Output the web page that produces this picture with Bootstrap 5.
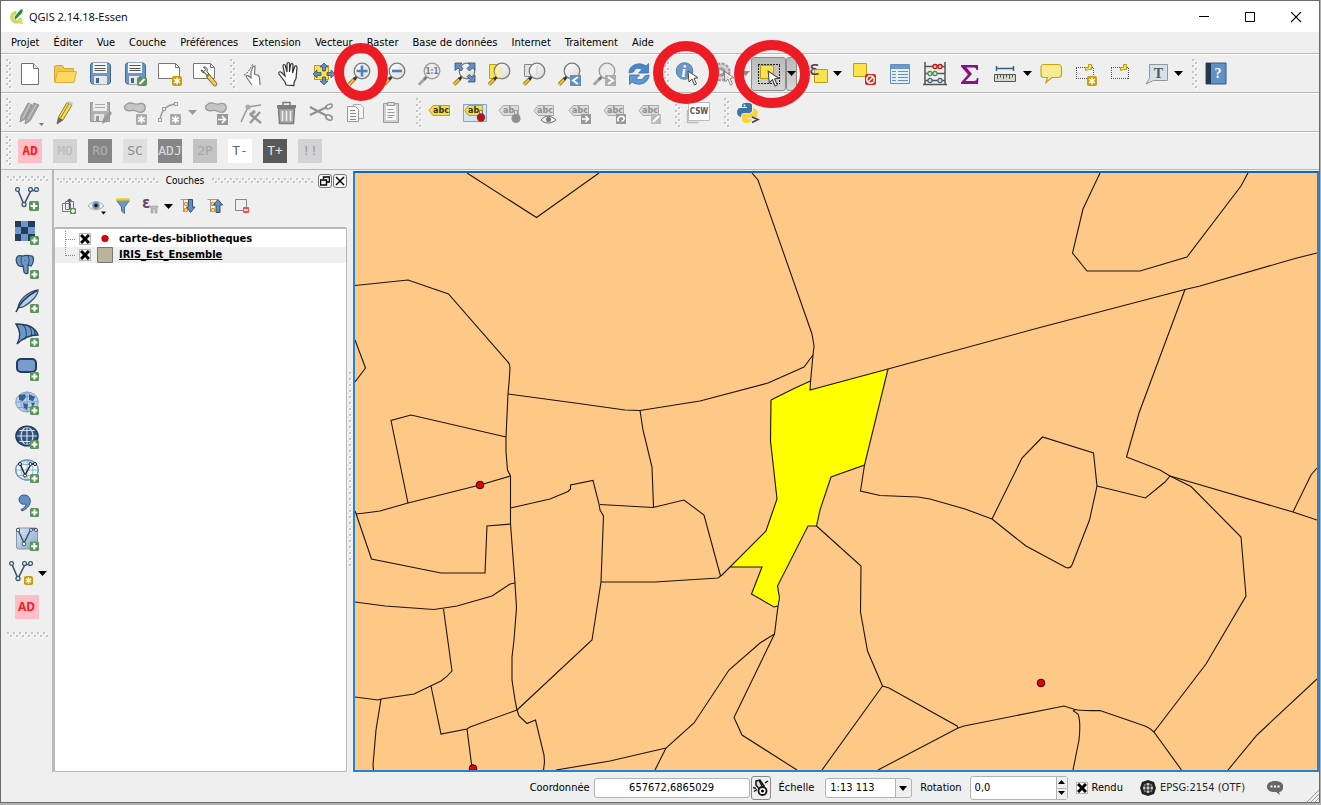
<!DOCTYPE html>
<html lang="fr">
<head>
<meta charset="utf-8">
<meta name="viewport" content="width=device-width, initial-scale=1">
<title>QGIS 2.14.18-Essen</title>
<link href="https://cdn.jsdelivr.net/npm/bootstrap@5.3.0/dist/css/bootstrap.min.css" rel="stylesheet">
<style>
:root{--face:#efefef;--line:#b8b8b8;--ui:"DejaVu Sans Condensed","DejaVu Sans",sans-serif}
body{font-family:var(--ui);font-size:11px;line-height:14px;color:#000;background:#b0b0b0;min-height:100vh;padding:0 1px 2px 0}
.app-window{background:var(--face);border:1px solid #6b6b6b}
.app-title{background:#fff;height:31px;font-family:"Open Sans",sans-serif}
.app-title h1{font-size:11px;line-height:16px;font-weight:400}
.btn{--bs-btn-padding-x:0;--bs-btn-padding-y:0;--bs-btn-border-radius:3px;--bs-btn-font-size:11px;--bs-btn-line-height:14px}
.win-btn{width:46px;height:30px}
.menu-bar{height:22px;gap:14px;border-bottom:1px solid var(--line);padding:1px 10px 0}
.menu-bar a{color:#000;text-decoration:none}
.tool-row{height:39px;border-top:1px solid #fff;border-bottom:1px solid var(--line);padding-left:5px}
.tool-row-short{height:38px}
.tool{width:35px;height:34px;flex:none;display:flex;align-items:center;justify-content:center}
.drop{width:11px;height:34px;flex:none;display:flex;align-items:center;justify-content:center}
.tool svg,.drop svg,.mini svg{display:block;overflow:visible}
.pressed{background:linear-gradient(#b9b9b9,#d6d6d6);border:1px solid #8b8b8b}
.grip{flex:none;width:6px;height:30px;background:url("data:image/svg+xml,%3Csvg xmlns='http://www.w3.org/2000/svg' width='6' height='6'%3E%3Cpath fill='%23fff' d='M1 1h2v2h-2zM4 4h2v2h-2z'/%3E%3Cpath fill='%23c2c2c2' d='M0 0h2v2h-2zM3 3h2v2h-2z'/%3E%3C/svg%3E")}
.tool + .grip,.drop + .grip{margin-left:8px}
.grip-h{width:auto;height:6px}
.tag-text{font-family:"DejaVu Sans",sans-serif;font-weight:bold;font-size:8px;fill:#333}
.tag-text.off{fill:#8f8f8f}
.code{width:24px;height:24px;border-radius:0;font:13px/24px "DejaVu Sans Mono",monospace;border:0;flex:none;padding:0}
.codes{gap:11px;padding-left:6px}
.code-ad{background:#ffbdc8;color:#fa1d26}
.code-mo{background:#d3d3d3;color:#b9b9b9}
.code-ro{background:#868686;color:#b0b0b0}
.code-sc{background:#dfdfdf;color:#8a8a8a}
.code-adj{background:#868686;color:#ddd}
.code-2p{background:#c3c3c3;color:#a6a6a6}
.code-tm{background:#fff;color:#666}
.code-tp{background:#595959;color:#e8e8e8}
.code-ex{background:#d3d3d3;color:#999}
.side-ad{font:bold 12px/24px "Noto Sans",sans-serif}
.side-bar{width:51px;flex:none;padding-top:6px}
.side-bar .grip-h{margin:0 4px 0 6px}
.side-bar .tool{height:34px;width:51px}
.layers{width:295px;flex:none;border-left:2px solid var(--line)}
.layers-head{height:21px;padding-left:3px}
.layers-head h2{font-size:10px;line-height:14px;font-weight:400}
.dock-btn{width:14px;height:14px;border:1px solid #777;background:#f6f6f6;flex:none;display:flex;align-items:center;justify-content:center;margin-left:1px}
.mini{width:27px;height:24px;flex:none;display:flex;align-items:center;justify-content:center}
.layers-tools{height:36px;padding:0 1px 6px}
.tree{background:#fff;border:1px solid var(--line);border-top-width:2px;border-radius:2px;padding-top:2px}
.tree li{height:16px;padding-left:10px}
.tree li.alt{background:#efefef}
.tree label{font-weight:700;margin-left:6px}
.tick{appearance:none;flex:none;width:12px;height:12px;border:1px solid #b4b4b4;background:#fff url("data:image/svg+xml,%3Csvg xmlns='http://www.w3.org/2000/svg' viewBox='0 0 10 10'%3E%3Cpath d='M1 1l8 8M9 1l-8 8' stroke='%23000' stroke-width='3'/%3E%3C/svg%3E") center/10px no-repeat}
.tick:not(:checked){background-image:none}
.splitter{width:6px;flex:none}
.splitter .grip{width:3px;height:198px}
.map-view{border:2px solid #2583d0;border-top-color:#0b66b4;margin-top:1px;background:#fec987;min-width:0;min-height:300px;position:relative}
.map-view svg{position:absolute;inset:0;width:100%;height:100%}
.status-row{height:30px;position:relative;padding:1px 35px 0 0}
.box{border:1px solid #b2b2b2;border-radius:3px;background:#fff;font-size:11px;line-height:14px;color:#000;padding:0 4px}
.coord{width:156px;height:20px;text-align:center;margin-left:4px}
.scale-list{width:87px;height:20px;margin-left:11px;appearance:none;background:#fff url("data:image/svg+xml,%3Csvg xmlns='http://www.w3.org/2000/svg' width='16' height='18'%3E%3Cpath fill='%23efefef' d='M0 0h16v18H0z'/%3E%3Cpath d='M.5 0v18' stroke='%23b2b2b2'/%3E%3Cpath d='M4 7h8l-4 5z'/%3E%3C/svg%3E") right center no-repeat}
.spin{width:98px;height:24px;margin-left:8px;padding:0}
.spin input{border:0;background:none;min-width:0;padding:0 4px;font-size:11px}
.spin-keys{width:16px;border-left:1px solid #b2b2b2;background:#efefef}
.spin-keys .btn{height:11px;border-radius:0;display:flex;align-items:center;justify-content:center}
.spin-keys .btn + .btn{border-top:1px solid #b2b2b2}
.pin-btn{width:20px;height:24px;border:1px solid #888;margin-left:1px}
.talk-btn{margin-left:20px}
.corner{position:absolute;right:0;bottom:0}
.rings{position:absolute;left:0;top:0;pointer-events:none;overflow:visible;z-index:5}
</style>
</head>
<body class="d-flex flex-column">

<svg width="0" height="0" class="position-absolute" aria-hidden="true">
  <defs>
    <linearGradient id="lens" x1="0" y1="0" x2="1" y2="1"><stop offset="0" stop-color="#fff"/><stop offset="1" stop-color="#d9d9d9"/></linearGradient>
    <linearGradient id="gsel" x1="0" y1="0" x2="1" y2="1"><stop offset="0" stop-color="#dfe9f4"/><stop offset="1" stop-color="#86a3c4"/></linearGradient>
  </defs>
  <symbol id="plus" viewBox="0 0 9 9"><rect width="9" height="9" rx="1.500" fill="#5b935b"/><path d="M4.500 1.500v6M1.500 4.500h6" stroke="#fff" stroke-width="2"/></symbol>
  <symbol id="star" viewBox="0 0 10 10"><rect width="10" height="10" rx="2" fill="#c99f0d"/><path d="M5 1.500v7M2 3.200l6 3.600M8 3.200l-6 3.600" stroke="#fff" stroke-width="1.400"/></symbol>
  <symbol id="gstar" viewBox="0 0 10 10"><rect width="10" height="10" rx="1" fill="#a9a9a9"/><path d="M5 1.500v7M2 3.200l6 3.600M8 3.200l-6 3.600" stroke="#fff" stroke-width="1.400"/></symbol>
  <symbol id="cursor" viewBox="0 0 12 16"><path d="M1 1l1 11 3-3 2.500 6 2-1L7 8.300l4-.5z" fill="#fff" stroke="#444" stroke-width="1"/></symbol>
  <symbol id="mag" viewBox="0 0 24 24"><path d="M2 22.500L8 16.500" stroke="#7a5d12" stroke-width="3.600"/><path d="M1.800 22.700L7.500 17" stroke="#f4c430" stroke-width="2.200"/><path d="M7 17.500l3-3" stroke="#333" stroke-width="2.600"/><circle cx="15" cy="9" r="7.800" fill="url(#lens)" stroke="#7c7c7c" stroke-width="1.300"/></symbol>
  <symbol id="gmag" viewBox="0 0 24 24"><path d="M1.800 22.700L8 16.500" stroke="#a5a5a5" stroke-width="3"/><path d="M7 17.500l3-3" stroke="#777" stroke-width="2.600"/><circle cx="15" cy="9" r="7.800" fill="#ececec" stroke="#9a9a9a" stroke-width="1.300"/></symbol>
  <symbol id="down" viewBox="0 0 9 5"><path d="M0 0h9L4.500 5z"/></symbol>
  <symbol id="tag" viewBox="0 0 24 24"><path d="M1 9.500L5 4.500h15.500v10H5z" fill="#dcdcdc" stroke="#ababab"/></symbol>
  <symbol id="mark" viewBox="0 0 24 24"><path d="M2 5.500h18M2 16.500h18M2.500 6v11M19.500 6v11" fill="none" stroke="#555" stroke-dasharray="1 1"/><path d="M11.500 5.500h3v-3h3v5h-3l-3 1z" fill="#fae34c" stroke="#b89d15"/></symbol>
  <symbol id="vnodes" viewBox="0 0 24 24"><path d="M3 3.500l6 14 7-14h5" fill="none" stroke="#3b5673" stroke-width="1.600"/><g fill="#fff" stroke="#3b5673" stroke-width="1.300"><circle cx="2.500" cy="2.500" r="1.900"/><circle cx="9" cy="17.500" r="2"/><circle cx="15.500" cy="2.500" r="1.900"/><circle cx="21.500" cy="2.500" r="1.900"/></g></symbol>
  <symbol id="globe" viewBox="0 0 24 24"><ellipse cx="12" cy="11" rx="11.300" ry="10"/><path d="M1 11h22M3 5.500h18M3 16.500h18M12 1v20M12 1c-8 5-8 15 0 20M12 1c8 5 8 15 0 20" fill="none"/></symbol>
  <symbol id="gpoly" viewBox="0 0 24 24"><path d="M4 3c4-3 7 1 11 0 5-2 8 1 7 5-1 4-6 4-9 2-4-2-8 2-11-2-1-2 0-4 2-5z" fill="#c5c5c5" stroke="#999" stroke-width="1.300"/></symbol>
</svg>

<div class="app-window flex-grow-1 d-flex flex-column position-relative">

  <header class="app-title d-flex align-items-center">
    <svg class="ms-2" width="16" height="16" viewBox="0 0 16 16" aria-hidden="true"><path d="M7 2.500a5.800 5.800 0 106 7.500l-2.500-1a3.300 3.300 0 11-3.500-3.800z" fill="#d3e25a" stroke="#a8bd2e" stroke-width=".6"/><path d="M9 10l4 1 1 4-3 0-3-3z" fill="#d5e25b"/><path d="M6 11l-.5-3L11.500.5h2.500l-1 3.500z" fill="#2b8b35"/></svg>
    <h1 class="m-0 ms-1">QGIS 2.14.18-Essen</h1>
    <div class="ms-auto d-flex">
      <button class="btn win-btn" type="button" aria-label="Réduire"><svg width="11" height="11"><path d="M0 4.500h10" stroke="#000"/></svg></button>
      <button class="btn win-btn" type="button" aria-label="Agrandir"><svg width="11" height="11"><path d="M.5.5h9v9h-9z" fill="none" stroke="#000"/></svg></button>
      <button class="btn win-btn" type="button" aria-label="Fermer"><svg width="11" height="11"><path d="M0 0l10 10M10 0L0 10" stroke="#000" stroke-width="1.200"/></svg></button>
    </div>
  </header>

  <nav class="menu-bar d-flex align-items-center">
    <a href="#">Projet</a><a href="#">Éditer</a><a href="#">Vue</a><a href="#">Couche</a><a href="#">Préférences</a><a href="#">Extension</a><a href="#">Vecteur</a><a href="#">Raster</a><a href="#">Base de données</a><a href="#">Internet</a><a href="#">Traitement</a><a href="#">Aide</a>
  </nav>

  <div class="tool-row d-flex align-items-center" role="toolbar" aria-label="Projet et navigation">
    <span class="grip"></span>
    <button class="btn tool" type="button" aria-label="Nouveau"><svg width="24" height="24"><path d="M3.500 1.500h12l5 5v16h-17z" fill="#fff" stroke="#707070"/><path d="M15.500 1.500v5h5" fill="#e4e4e4" stroke="#707070"/></svg></button>
    <button class="btn tool" type="button" aria-label="Ouvrir"><svg width="24" height="24"><path d="M1.500 20V4.500l1.500-1h6.500l1.500 3h9.500V10" fill="#f0c54c" stroke="#d3a633"/><path d="M4.500 9.500h19l-2.500 11H2z" fill="#ffd95e" stroke="#dcae3a"/></svg></button>
    <button class="btn tool" type="button" aria-label="Enregistrer"><svg width="24" height="24"><path d="M3.500 1h17l2 2v17l-1.500 2h-17l-1.500-2V3z" fill="#6c98c8" stroke="#456587"/><path d="M5 1h14v10H5z" fill="#f7f7f7"/><path d="M6.500 3.500h11M6.500 6.500h11M6.500 8.500h11" stroke="#555"/><path d="M6 14h13v8H6z" fill="#e7e7e7"/><path d="M8 16h3v5H8z" fill="#456587"/></svg></button>
    <button class="btn tool" type="button" aria-label="Enregistrer sous"><svg width="24" height="24"><path d="M3.500 1h17l2 2v17l-1.500 2h-17l-1.500-2V3z" fill="#6c98c8" stroke="#456587"/><path d="M5 1h14v10H5z" fill="#f7f7f7"/><path d="M6.500 3.500h11M6.500 6.500h11M6.500 8.500h11" stroke="#555"/><path d="M6 14h10v8H6z" fill="#e7e7e7"/><path d="M8 16h3v5H8z" fill="#456587"/><rect x="14" y="15" width="10" height="9" rx="2" fill="#5b935b"/><path d="M16.500 22l5-5" stroke="#fff" stroke-width="2"/></svg></button>
    <button class="btn tool" type="button" aria-label="Nouveau composeur"><svg width="24" height="24"><path d="M.5 1.500h17l4 4v11H.5z" fill="#fff" stroke="#777"/><path d="M17.500 1.500v4h4" fill="none" stroke="#777"/><use href="#star" x="14" y="14" width="10" height="10"/></svg></button>
    <button class="btn tool" type="button" aria-label="Gestionnaire de composeurs"><svg width="24" height="24"><path d="M.5 1.500h17l4 4v11H.5z" fill="#fff" stroke="#777"/><path d="M17.500 1.500v4h4" fill="none" stroke="#777"/><path d="M8 8a4 4 0 004 3l3 4 2-1.500-3-4c1-3-1-5-3.500-4.500l2 2.500-1.500 2z" fill="#eee" stroke="#444"/><path d="M15.500 14.500l6.500 7.500" stroke="#7a6420" stroke-width="4.600" stroke-linecap="round"/><path d="M16 15l6 7" stroke="#e9cd67" stroke-width="3" stroke-linecap="round"/></svg></button>
    <span class="grip"></span>
    <button class="btn tool" type="button" aria-label="Toucher"><svg width="24" height="24"><path d="M10 23l-5-7-1-2 2-.5 3 2.500V9.500l2-5 2-.5-.5 8 4 1.500 1 2 .5 7.500" fill="#fff" stroke="#777" stroke-width="1.200"/><path d="M2 13l3-2 3-4 3-5" fill="none" stroke="#666" stroke-dasharray="2 1"/></svg></button>
    <button class="btn tool" type="button" aria-label="Se déplacer"><svg width="24" height="24"><path d="M9 23l-1-3-6-8c-1-2 1-3 2.500-1.500L8 14 6 4c0-2 2-2 2.500 0l1.500 6V2c0-2 2.500-2 2.500 0v8l1-7c.5-2 2.500-1.500 2.500 0l-.5 8 2-6c.5-2 2.500-1 2.500.5l-1 11-2 4v3z" fill="#fff" stroke="#333" stroke-width="1.200"/></svg></button>
    <button class="btn tool" type="button" aria-label="Centrer sur la sélection"><svg width="24" height="24"><path d="M2.500 3.500h14v14h-14z" fill="#fae34c" stroke="#b89d15"/><g fill="#5f8fc4" stroke="#345" stroke-width=".7"><path d="M12 1l4 4h-2.500v4h-3V5H8zM12 23l4-4h-2.500v-4h-3v4H8zM1 12l4-4v2.500h4v3H5V16zM23 12l-4-4v2.500h-4v3h4V16z"/></g></svg></button>
    <button class="btn tool" type="button" aria-label="Zoom +"><svg width="24" height="24"><use href="#mag" width="24" height="24"/><path d="M15 3.500v11M9.500 9h11" stroke="#4b82bb" stroke-width="2.600"/></svg></button>
    <button class="btn tool" type="button" aria-label="Zoom -"><svg width="24" height="24"><use href="#mag" width="24" height="24"/><path d="M10 9h10" stroke="#4b82bb" stroke-width="2.600"/></svg></button>
    <button class="btn tool" type="button" aria-label="Zoom 1:1"><svg width="24" height="24"><use href="#gmag" width="24" height="24"/><text x="15" y="12" text-anchor="middle" font-family="DejaVu Sans Condensed" font-weight="bold" font-size="8" fill="#777">1:1</text></svg></button>
    <button class="btn tool" type="button" aria-label="Zoom étendu"><svg width="24" height="24"><use href="#mag" width="24" height="24"/><g fill="#5f8fc4" stroke="#345270" stroke-width=".8"><path d="M3 1h7L8 3.500l3 3L9 9 6 6 3 8.500zM23 1v7l-2.500-2-3 3-2.500-2.500 3-3L16 1zM23 20h-7l2-2.500-3-3 2.500-2 3 3L23 13z"/></g></svg></button>
    <button class="btn tool" type="button" aria-label="Zoom sur la sélection"><svg width="24" height="24"><path d="M2.500 2.500h12v14h-12z" fill="#fae34c" stroke="#b89d15"/><use href="#mag" width="24" height="24"/><path d="M15 3.500v12.500h-4a7 7 0 01-2-10z" fill="#f8ef9a" opacity=".8"/></svg></button>
    <button class="btn tool" type="button" aria-label="Zoom sur la couche"><svg width="24" height="24"><path d="M2.500 2.500h12v12h-12z" fill="#e3e3e3" stroke="#888"/><use href="#mag" width="24" height="24"/><path d="M15 3.500v10" stroke="#ccc"/></svg></button>
    <button class="btn tool" type="button" aria-label="Zoom précédent"><svg width="24" height="24"><use href="#mag" width="24" height="24"/><path d="M13 13h11v11H13z" fill="#5f8fc4"/><path d="M21 15l-5 3.500 5 3.500" fill="none" stroke="#fff" stroke-width="2"/></svg></button>
    <button class="btn tool" type="button" aria-label="Zoom suivant"><svg width="24" height="24"><use href="#gmag" width="24" height="24"/><path d="M13 13h11v11H13z" fill="#acacac"/><path d="M16 15l5 3.500-5 3.500" fill="none" stroke="#fff" stroke-width="2"/></svg></button>
    <button class="btn tool" type="button" aria-label="Rafraîchir"><svg width="24" height="24"><path d="M2 11C2 3 12-1 19 4l2.500-2.500V11h-10L15 7.500C11 5 7 7 6.500 10z" fill="#4b87c6" stroke="#3a6ea5" stroke-width=".8"/><path d="M22 13c0 8-10 12-17 7l-2.500 2.500V13h10L9 16.500c4 2.500 8 .5 8.500-2.500z" fill="#5d97d2" stroke="#3a6ea5" stroke-width=".8"/></svg></button>
    <span class="grip"></span>
    <button class="btn tool" type="button" aria-label="Identifier"><svg width="24" height="24"><circle cx="8.500" cy="9" r="8.300" fill="#6c98c8" stroke="#5681b1"/><text x="5.500" y="14.500" font-family="Liberation Serif" font-style="italic" font-weight="bold" font-size="16" fill="#fff">i</text><use href="#cursor" x="11" y="8" width="12" height="16"/></svg></button>
    <button class="btn tool" type="button" aria-label="Lancer une action"><svg width="24" height="24"><circle cx="10" cy="10" r="8.500" fill="#cfcfcf" stroke="#9b9b9b" stroke-width="2" stroke-dasharray="3 1.500"/><circle cx="10" cy="10" r="4.500" fill="#999"/><path d="M8.500 7.500l4 2.500-4 2.500z" fill="#fff"/><use href="#cursor" x="12" y="8" width="12" height="16" opacity=".6"/></svg></button>
    <button class="btn drop" type="button" aria-label="Actions"><svg width="9" height="5" fill="#8a8a8a"><use href="#down" width="9" height="5"/></svg></button>
    <button class="btn tool pressed" type="button" aria-label="Sélectionner"><svg width="24" height="24"><path d="M1 2.500h22M1 21.500h22M1.500 3v18M22.500 3v18" fill="none" stroke="#222" stroke-dasharray="2 1"/><path d="M3.500 3.500h13v13h-13z" fill="#fae34c" stroke="#b89d15"/><use href="#cursor" x="10" y="8" width="13" height="17"/></svg></button>
    <button class="btn drop pressed" type="button" aria-label="Modes de sélection"><svg width="9" height="5"><use href="#down" width="9" height="5"/></svg></button>
    <button class="btn tool" type="button" aria-label="Sélection par expression"><svg width="24" height="24"><path d="M11.500 7.500h13v13h-13z" fill="#fae34c" stroke="#b89d15"/><text x="6" y="13" font-family="DejaVu Sans" font-size="20" fill="#5b3a60">ε</text></svg></button>
    <button class="btn drop me-1" type="button" aria-label="Expressions"><svg width="9" height="5"><use href="#down" width="9" height="5"/></svg></button>
    <button class="btn tool" type="button" aria-label="Désélectionner"><svg width="24" height="24"><path d="M.5 1.500h13v13h-13z" fill="#fae34c" stroke="#b89d15"/><rect x="12" y="12" width="11" height="11" rx="2" fill="#cf2a27"/><circle cx="17.500" cy="17.500" r="3.700" fill="none" stroke="#fff" stroke-width="1.500"/><path d="M15 20l5-5" stroke="#fff" stroke-width="1.500"/></svg></button>
    <button class="btn tool" type="button" aria-label="Table d'attributs"><svg width="24" height="24"><path d="M2.500 2.500h19v19h-19z" fill="#e6eff8" stroke="#5f8fc4"/><path d="M3 3h18v4H3z" fill="#6c98c8"/><path d="M4 9.500h4M10 9.500h10M4 12.500h4M10 12.500h10M4 15.500h4M10 15.500h10M4 18.500h4M10 18.500h10" stroke="#5f8fc4"/></svg></button>
    <button class="btn tool" type="button" aria-label="Calculatrice de champ"><svg width="24" height="24"><path d="M2 0v22M22 0v22M0 22.500h24M2 4.500h20M2 11.500h20M2 18.500h20" stroke="#555" stroke-width="1.500"/><g stroke-width="1.200"><g fill="#f1b6b6" stroke="#b11"><circle cx="12" cy="4.500" r="2.100"/><circle cx="17" cy="4.500" r="2.100"/></g><g fill="#cfe6cf" stroke="#488a48"><circle cx="7" cy="11.500" r="2.100"/><circle cx="12" cy="11.500" r="2.100"/></g><g fill="#cddff2" stroke="#467"><circle cx="7" cy="18.500" r="2.100"/><circle cx="17" cy="18.500" r="2.100"/></g></g></svg></button>
    <button class="btn tool" type="button" aria-label="Résumé statistique"><svg width="24" height="24"><path d="M3 3h17v5h-1.500c-.5-2-1-2.500-3-2.500H8.500L14 12l-6.500 7H16c2 0 2.500-1 3-3h1.500L20 22H3v-1.500l7-8L3 4.500z" fill="#8a0f8a"/></svg></button>
    <button class="btn tool" type="button" aria-label="Mesurer"><svg width="24" height="24"><path d="M3.500 4v5M20.500 4v5M3.500 6.500h17" stroke="#3b5f7d" stroke-width="1.500"/><path d="M1.500 12.500h21v7h-21z" fill="#d8d8d0" stroke="#555"/><path d="M4.500 13v4M7.500 13v2.500M10.500 13v4M13.500 13v2.500M16.500 13v4M19.500 13v2.500" stroke="#555"/></svg></button>
    <button class="btn drop" type="button" aria-label="Mesures"><svg width="9" height="5"><use href="#down" width="9" height="5"/></svg></button>
    <button class="btn tool" type="button" aria-label="Infobulles"><svg width="24" height="24"><path d="M5 2.500h14c3 0 3.500 1 3.500 4v5c0 3-1 4-3.500 4h-6l-6 5 1.500-5H5c-2.500 0-3-1-3-4v-5c0-3 .5-4 3-4z" fill="#f8ec92" stroke="#c9a30f" stroke-width="1.200"/></svg></button>
    <button class="btn tool" type="button" aria-label="Nouveau signet"><svg width="24" height="24"><use href="#mark" width="24" height="24"/><use href="#star" x="13" y="14" width="10" height="10"/></svg></button>
    <button class="btn tool" type="button" aria-label="Signets"><svg width="24" height="24"><use href="#mark" width="24" height="24"/></svg></button>
    <button class="btn tool" type="button" aria-label="Annotation"><svg width="24" height="24"><path d="M5.500 2.500h18v16h-14l-7.500 3.500 3.500-5.500z" fill="#d6e0e8" stroke="#8e979f"/><text x="14.500" y="15.500" text-anchor="middle" font-family="Liberation Serif" font-weight="bold" font-size="14" fill="#555">T</text></svg></button>
    <button class="btn drop" type="button" aria-label="Annotations"><svg width="9" height="5"><use href="#down" width="9" height="5"/></svg></button>
    <span class="grip"></span>
    <button class="btn tool" type="button" aria-label="Aide"><svg width="24" height="24"><path d="M2 1h20v21H2z" fill="#6090c8" stroke="#3b5673"/><path d="M2 1h5v21H2z" fill="#26374b"/><text x="14" y="16" text-anchor="middle" font-family="Liberation Serif" font-weight="bold" font-size="14" fill="#fff">?</text></svg></button>
  </div>

  <div class="tool-row d-flex align-items-center" role="toolbar" aria-label="Numérisation et étiquettes">
    <span class="grip"></span>
    <button class="btn tool" type="button" aria-label="Modifications en cours"><svg width="24" height="24"><g fill="#a6a6a6" stroke="#858585" stroke-width=".8"><path d="M2 21l1-6L10 2l4 2-7 14z"/><path d="M7 23l1-6L16 2l5 2-9 16z"/></g><path d="M12 3L5 17M18 4l-8 14" stroke="#ccc"/><path d="M21 22h5l-2.500 3z" fill="#777"/></svg></button>
    <button class="btn tool" type="button" aria-label="Basculer en mode édition"><svg width="24" height="24"><path d="M4 23l1.500-7L14 1.500l5 2.500-9 15z" fill="#f4dc55" stroke="#94822a"/><path d="M16 2.500L7.500 17" stroke="#94822a"/><path d="M14 1.500l5 2.500 1-2-4-2z" fill="#c9c9c9"/><path d="M4 23l1.500-7 4.500 3z" fill="#666"/></svg></button>
    <button class="btn tool" type="button" aria-label="Enregistrer les modifications"><svg width="24" height="24"><path d="M2.500 1.500h19v19h-19z" fill="#b0b0b0" stroke="#969696"/><path d="M5 1h14v9H5z" fill="#eee"/><path d="M7 3.500h10M7 6.500h10" stroke="#aaa"/><path d="M6 13h10v7H6z" fill="#e2e2e2"/><path d="M8 15h3v5H8z" fill="#999"/><path d="M14 23l1-5 7-8 2 2-6 9z" fill="#999"/></svg></button>
    <button class="btn tool" type="button" aria-label="Ajouter une entité"><svg width="24" height="24"><use href="#gpoly" width="24" height="24"/><use href="#gstar" x="13" y="13" width="11" height="11"/></svg></button>
    <button class="btn tool" type="button" aria-label="Ajouter une courbe"><svg width="24" height="24"><path d="M2 19C3 11 7 4 18 3" fill="none" stroke="#999" stroke-width="1.400"/><path d="M.5 17.500h3v3h-3zM4.500 6.500h3v3h-3zM16.500 1.500h3v3h-3z" fill="#eee" stroke="#999"/><use href="#gstar" x="12" y="13" width="11" height="11"/></svg></button>
    <button class="btn drop" type="button" aria-label="Courbes"><svg width="9" height="5" fill="#999"><use href="#down" width="9" height="5"/></svg></button>
    <button class="btn tool" type="button" aria-label="Déplacer une entité"><svg width="24" height="24"><use href="#gpoly" width="24" height="24"/><path d="M13 13h11v11H13z" fill="#999"/><path d="M14 18.500h7M18 15l3.500 3.500L18 22" stroke="#fff" stroke-width="1.600" fill="none"/></svg></button>
    <button class="btn tool" type="button" aria-label="Outil de nœud"><svg width="24" height="24"><path d="M2 21L9 6l13-2" fill="none" stroke="#999" stroke-width="1.500"/><circle cx="9" cy="6" r="2.600" fill="#aaa"/><path d="M11 13l11 9M21 11l-10 11" stroke="#999" stroke-width="2.400"/><path d="M11 14l5-4" stroke="#999" stroke-width="3"/></svg></button>
    <button class="btn tool" type="button" aria-label="Supprimer"><svg width="24" height="24"><path d="M4.500 7.500h16l-1 15h-14z" fill="#aaa" stroke="#7d7d7d" stroke-width="1.500"/><path d="M3 5.500h19" stroke="#7d7d7d" stroke-width="3"/><path d="M9 4V1.500h7V4" fill="none" stroke="#7d7d7d" stroke-width="1.500"/><path d="M8.500 10v10M12.500 10v10M16.500 10v10" stroke="#eee" stroke-width="1.600"/></svg></button>
    <button class="btn tool" type="button" aria-label="Couper"><svg width="24" height="24"><path d="M1 6l17 9M1 14l17-8" stroke="#909090" stroke-width="2"/><ellipse cx="20" cy="5.500" rx="3.500" ry="2" fill="none" stroke="#909090" stroke-width="1.500" transform="rotate(-25 20 5.500)"/><ellipse cx="20" cy="16.500" rx="3.500" ry="2.300" fill="none" stroke="#909090" stroke-width="1.500" transform="rotate(30 20 16.500)"/></svg></button>
    <button class="btn tool" type="button" aria-label="Copier"><svg width="24" height="24"><path d="M9.500 3.500h7l3 3v11h-10z" fill="#f4f4f4" stroke="#aaa"/><path d="M3.500 5.500h8l3 3v12h-11z" fill="#f8f8f8" stroke="#999"/><path d="M6 9.500h5M6 12.500h6M6 15.500h6M6 18.500h6" stroke="#888"/></svg></button>
    <button class="btn tool" type="button" aria-label="Coller"><svg width="24" height="24"><path d="M4.500 2.500h15v19h-15z" fill="#d0d0d0" stroke="#9a9a9a"/><path d="M7 5h10v14H7z" fill="#f7f7f7"/><path d="M8.500 1.500h7v3h-7z" fill="#ddd" stroke="#999"/><path d="M8.500 8.500h6M8.500 11.500h7M8.500 14.500h7M8.500 16.500h5" stroke="#999"/></svg></button>
    <span class="grip"></span>
    <button class="btn tool" type="button" aria-label="Étiquetage"><svg width="24" height="24"><path d="M1 9.500L5 4.500h16.500v10H5z" fill="#f7dc45" stroke="#c4a112"/><text class="tag-text" x="5" y="12">abc</text></svg></button>
    <button class="btn tool" type="button" aria-label="Épingler"><svg width="24" height="24"><path d="M.5 3.500h23v17H.5z" fill="#d5e3f3" stroke="#7ba7d8"/><path d="M2 9.500l3.500-5h14v10h-14z" fill="#f7dc45" stroke="#c4a112"/><text class="tag-text" x="5" y="12">ab</text><path d="M16.500 14V9.500h3V14" fill="#ddd" stroke="#777"/><circle cx="18" cy="16.500" r="4.200" fill="#b01818"/></svg></button>
    <button class="btn tool" type="button" aria-label="Étiquettes épinglées"><svg width="24" height="24"><use href="#tag" width="24" height="24"/><text class="tag-text off" x="5" y="12">ab</text><path d="M16.500 14V9.500h3V14" fill="#ddd" stroke="#999"/><circle cx="18" cy="17.500" r="4.600" fill="#919191"/></svg></button>
    <button class="btn tool" type="button" aria-label="Afficher les étiquettes"><svg width="24" height="24"><use href="#tag" width="24" height="24"/><text class="tag-text off" x="4" y="12">abc</text><path d="M8 19c4-5 10-5 15 0-5 4-11 4-15 0z" fill="#f2f2f2" stroke="#666"/><circle cx="15.500" cy="18.500" r="2.500" fill="#777"/></svg></button>
    <button class="btn tool" type="button" aria-label="Déplacer l'étiquette"><svg width="24" height="24"><use href="#tag" width="24" height="24"/><text class="tag-text off" x="4" y="12">abc</text><path d="M13 13h10v10H13z" fill="#999"/><path d="M14 18h6M17.500 15l3 3-3 3" stroke="#fff" stroke-width="1.500" fill="none"/></svg></button>
    <button class="btn tool" type="button" aria-label="Pivoter l'étiquette"><svg width="24" height="24"><use href="#tag" width="24" height="24"/><text class="tag-text off" x="4" y="12">abc</text><path d="M13 13h10v10H13z" fill="#999"/><path d="M15.500 20.500c-2-3 1-6 4-5s1.500 5-1 4.500" stroke="#fff" stroke-width="1.500" fill="none"/></svg></button>
    <button class="btn tool" type="button" aria-label="Modifier l'étiquette"><svg width="24" height="24"><use href="#tag" width="24" height="24"/><text class="tag-text off" x="4" y="12">abc</text><path d="M13 13h10v10H13z" fill="#bbb"/><path d="M15 21l6-6" stroke="#fff" stroke-width="2"/></svg></button>
    <span class="grip"></span>
    <button class="btn tool" type="button" aria-label="Catalogue CSW"><svg width="24" height="24"><path d="M.5 9v12.500h11" fill="none" stroke="#bbb" stroke-width="1.500"/><path d="M1.500 1.500h21v18h-21z" fill="#fff" stroke="#bbb"/><text x="12" y="13" text-anchor="middle" font-family="DejaVu Sans Condensed" font-weight="bold" font-size="8" fill="#555">CSW</text></svg></button>
    <span class="grip"></span>
    <button class="btn tool" type="button" aria-label="Console Python"><svg width="24" height="24"><path d="M6 4c0-3 10-3 10 0v5c0 2-1 3-3 3H8c-2 0-3 1-3 4-5 0-5-9-1-9h7V6H6z" fill="#3b75a8"/><path d="M17 7c6 0 6 9 2 10h-8v1h5c0 5-10 5-10 1v-4c0-2 2-2.500 3-2.500h5c2 0 3-1.500 3-3.500z" fill="#fbd43c"/><circle cx="8.500" cy="4.500" r="1" fill="#fff"/><path d="M16 16l6 2.500-6 3" fill="none" stroke="#444" stroke-width="1.600"/></svg></button>
  </div>

  <div class="tool-row tool-row-short d-flex align-items-center" role="toolbar" aria-label="Numérisation avancée">
    <span class="grip"></span>
    <div class="codes d-flex">
      <button class="code code-ad fw-bold" type="button">AD</button>
      <button class="code code-mo" type="button">MO</button>
      <button class="code code-ro" type="button">RO</button>
      <button class="code code-sc" type="button">SC</button>
      <button class="code code-adj" type="button">ADJ</button>
      <button class="code code-2p" type="button">2P</button>
      <button class="code code-tm" type="button">T-</button>
      <button class="code code-tp" type="button">T+</button>
      <button class="code code-ex" type="button">!!</button>
    </div>
  </div>

  <main class="flex-grow-1 d-flex">
    <div class="side-bar" role="toolbar" aria-label="Gestion des couches">
      <span class="grip grip-h d-block"></span>
      <button class="btn tool" type="button" aria-label="Couche vecteur"><svg width="24" height="24"><use href="#vnodes" width="24" height="24"/><use href="#plus" x="14" y="14" width="10" height="10"/></svg></button>
      <button class="btn tool" type="button" aria-label="Couche raster"><svg width="24" height="24"><path d="M0 0h20v20H0z" fill="#6c98c8"/><path d="M0 0h6v6H0zM13 0h7v6h-7zM6 6h7v7H6zM0 13h6v7H0zM13 13h7v7h-7z" fill="#233b5c"/><use href="#plus" x="15" y="15" width="9" height="9"/></svg></button>
      <button class="btn tool" type="button" aria-label="Couche PostGIS"><svg width="24" height="24"><path d="M3 1c2-1 4 0 5 0 2-1 4-1 9 0 3 2 1 8-1 10l-3-1v8c-1 1-3 1-4-1l-1-6c-2 1-4 0-5-1C1 7 0 3 3 1z" fill="#6c98c8" stroke="#2c4768" stroke-width="1.200"/><path d="M7 1C5 4 6 8 8 11M13 1c2 3 1 7 0 9M10 5v1" fill="none" stroke="#2c4768"/><use href="#plus" x="15" y="15" width="9" height="9"/></svg></button>
      <button class="btn tool" type="button" aria-label="Couche SpatiaLite"><svg width="24" height="24"><path d="M3 19C4 11 12 3 23 1c0 5-6 12-15 17z" fill="#b9d0ea" stroke="#3b5673" stroke-width="1.300"/><path d="M1 23C4 15 12 7 22 1.500" fill="none" stroke="#233b5c" stroke-width="1.500"/><use href="#plus" x="15" y="15" width="9" height="9"/></svg></button>
      <button class="btn tool" type="button" aria-label="Couche MSSQL"><svg width="24" height="24"><path d="M1 1c9 0 19 2 22 11-7 0-14 2-21 9 4-7 4-13-1-20z" fill="#6c98c8" stroke="#233b5c" stroke-width="1.300"/><path d="M8 1.500c4 5 4 11 2 15M13 2.500c4 4 4 8 3 11M18 5c2 3 2 5 2 7" fill="none" stroke="#233b5c"/><use href="#plus" x="15" y="15" width="9" height="9"/></svg></button>
      <button class="btn tool" type="button" aria-label="Couche Oracle"><svg width="24" height="24"><rect x="2" y="2" width="19" height="13" rx="4" fill="#7a9bd0" stroke="#233b5c" stroke-width="2"/><use href="#plus" x="15" y="15" width="9" height="9"/></svg></button>
      <button class="btn tool" type="button" aria-label="Couche WMS"><svg width="24" height="24"><use href="#globe" width="24" height="24" fill="#b8d0ea" stroke="#7ea3cc"/><path d="M4 4l6-1 1 3-3 4-4-1zM14 3l6 3-2 4-4-1zM8 12l5 1-1 6-3-2zM16 12l4 0-2 4z" fill="#3b5f8a"/><use href="#plus" x="15" y="15" width="9" height="9"/></svg></button>
      <button class="btn tool" type="button" aria-label="Couche WCS"><svg width="24" height="24"><use href="#globe" width="24" height="24" fill="#35557f" stroke="#cfe0f2" stroke-width="1.200"/><ellipse cx="12" cy="11" rx="11" ry="9.800" fill="none" stroke="#233b5c" stroke-width="1.600"/><use href="#plus" x="15" y="15" width="9" height="9"/></svg></button>
      <button class="btn tool" type="button" aria-label="Couche WFS"><svg width="24" height="24"><use href="#globe" width="24" height="24" fill="#f3f8fd" stroke="#8eb2da"/><ellipse cx="12" cy="11" rx="11.300" ry="10" fill="none" stroke="#6c98c8" stroke-width="1.300"/><path d="M5 5l5 11 6-11h5" fill="none" stroke="#222" stroke-width="1.400"/><g fill="#fff" stroke="#222"><circle cx="5" cy="5" r="1.500"/><circle cx="10" cy="16.500" r="1.500"/><circle cx="15.500" cy="5" r="1.500"/><circle cx="20" cy="5" r="1.500"/></g><use href="#plus" x="15" y="15" width="9" height="9"/></svg></button>
      <button class="btn tool" type="button" aria-label="Texte délimité"><svg width="24" height="24"><path d="M9 2c5 0 7 4 6 8-1 4-5 7-8 8l-1-1.500c3-1 5-3 5-5.500-4 1-7-1-7-4.500C4 4 6 2 9 2z" fill="#6090c8" stroke="#3b5673"/><use href="#plus" x="15" y="15" width="9" height="9"/></svg></button>
      <button class="btn tool" type="button" aria-label="Couche virtuelle"><svg width="24" height="24"><rect x="1.500" y="1" width="21" height="21" rx="2" fill="url(#gsel)" stroke="#8298b0"/><path d="M3 3l6 13 7-14h6" fill="none" stroke="#3b5673" stroke-width="1.500"/><g fill="#fff" stroke="#3b5673"><circle cx="3" cy="3" r="1.700"/><circle cx="9" cy="17" r="1.800"/><circle cx="16" cy="3" r="1.500"/><circle cx="21" cy="3" r="1.500"/></g><use href="#plus" x="14.500" y="14.500" width="9.500" height="9.500"/></svg></button>
      <div class="d-flex ps-1">
        <button class="btn tool flex-shrink-1" type="button" aria-label="Nouvelle couche"><svg width="24" height="24"><use href="#vnodes" width="24" height="24"/><use href="#star" x="15" y="15" width="9" height="9"/></svg></button>
        <button class="btn drop me-1" type="button" aria-label="Types de couche"><svg width="9" height="5"><use href="#down" width="9" height="5"/></svg></button>
      </div>
      <div class="tool"><button class="code code-ad side-ad" type="button">AD</button></div>
      <span class="grip grip-h d-block mt-2"></span>
    </div>

    <section class="layers d-flex flex-column">
      <div class="layers-head d-flex align-items-center">
        <span class="grip grip-h flex-fill"></span>
        <h2 class="m-0 mx-2">Couches</h2>
        <span class="grip grip-h flex-fill me-1"></span>
        <button class="btn dock-btn" type="button" aria-label="Détacher"><svg width="10" height="10"><path d="M3.500 3V1h6v5h-3M.5 4h6v5h-6z" fill="none" stroke="#000" stroke-width="1.400"/></svg></button>
        <button class="btn dock-btn" type="button" aria-label="Fermer le panneau"><svg width="10" height="10"><path d="M1 1l8 8M9 1L1 9" stroke="#000" stroke-width="1.500"/></svg></button>
      </div>
      <div class="layers-tools d-flex align-items-center">
        <button class="btn mini" type="button" aria-label="Ajouter un groupe"><svg width="16" height="16"><path d="M1.500 5.500h8v8h-8zM4.500 3.500h8v8h-8z" fill="none" stroke="#777"/><path d="M8.500 2v9M8.500 1l-2 2M8.500 1l2 2" stroke="#3b5f8a" stroke-width="1.300"/><use href="#plus" x="9" y="10" width="6" height="6"/></svg></button>
        <button class="btn mini" type="button" aria-label="Visibilité"><svg width="16" height="16"><path d="M0 8c4-6 12-6 16 0-5 5-12 5-16 0z" fill="#eee" stroke="#aaa"/><circle cx="8" cy="7.500" r="3.800" fill="#6c98c8"/><circle cx="8" cy="7.500" r="1.800" fill="#111"/><path d="M13 13.500h5l-2.500 3z"/></svg></button>
        <button class="btn mini" type="button" aria-label="Filtrer la légende"><svg width="16" height="16"><path d="M1.500 2.500h13L9.500 9v6.500l-3-2.500V9z" fill="#6c98c8" stroke="#49709b"/><path d="M1 1.500h14" stroke="#e3cf3c" stroke-width="2.500"/></svg></button>
        <button class="btn mini" type="button" aria-label="Filtrer par expression"><svg width="16" height="16"><text x="0" y="10" font-family="DejaVu Sans" font-weight="bold" font-size="15" fill="#6b4a6e">ε</text><path d="M7 8h9l-1 2v5h-2v-4h-2v4h-2v-5z" fill="#bbb" stroke="#999" stroke-width=".6"/></svg></button>
        <button class="btn drop" type="button" aria-label="Options de filtre"><svg width="9" height="5"><use href="#down" width="9" height="5"/></svg></button>
        <button class="btn mini" type="button" aria-label="Tout déplier"><svg width="16" height="16"><path d="M.5 1.500h10M3.500 2v12M3.500 6.500h3M3.500 12h3" fill="none" stroke="#999"/><path d="M4.500 4.500h3v3h-3zM4.500 10.500h3v3h-3z" fill="#fd8" stroke="#f0901e"/><path d="M8.500 1.500h4V9H15l-4.500 5.500L6.500 9h2z" fill="#5f8fc4" stroke="#345270"/></svg></button>
        <button class="btn mini" type="button" aria-label="Tout replier"><svg width="16" height="16"><path d="M.5 1.500h10M3.500 2v12M3.500 6.500h3M3.500 12h3" fill="none" stroke="#999"/><path d="M4.500 4.500h3v3h-3zM4.500 10.500h3v3h-3z" fill="#fd8" stroke="#f0901e"/><path d="M9 14.500h4V7h2.500L11 1.500 6.500 7H9z" fill="#5f8fc4" stroke="#345270"/></svg></button>
        <button class="btn mini" type="button" aria-label="Supprimer la couche"><svg width="16" height="16"><path d="M1.500 1.500h11v11h-11z" fill="none" stroke="#888"/><rect x="9" y="9" width="6" height="6" rx="1" fill="#ef5350"/><path d="M10 12h4" stroke="#fff" stroke-width="1.500"/></svg></button>
      </div>
      <ul class="tree list-unstyled flex-grow-1 m-0">
        <li class="d-flex align-items-center">
          <svg width="14" height="16"><path d="M.5 0v16M1 8.500H11" fill="none" stroke="#888" stroke-dasharray="1 1"/></svg>
          <input class="tick" type="checkbox" id="lay1" checked>
          <svg class="ms-1" width="18" height="16"><circle cx="10" cy="7.500" r="3.300" fill="#e60000" stroke="#600" stroke-width=".6"/></svg>
          <label for="lay1">carte-des-bibliotheques</label>
        </li>
        <li class="d-flex align-items-center alt">
          <svg width="14" height="16"><path d="M.5 0v9M1 8.500H11" fill="none" stroke="#888" stroke-dasharray="1 1"/></svg>
          <input class="tick" type="checkbox" id="lay2" checked>
          <svg class="ms-1" width="18" height="16"><path d="M2.500.5h15v15h-15z" fill="#bab49c" stroke="#777"/></svg>
          <label for="lay2" class="text-decoration-underline">IRIS_Est_Ensemble</label>
        </li>
      </ul>
    </section>

    <div class="splitter d-flex align-items-center justify-content-center"><span class="grip"></span></div>

    <section class="map-view flex-grow-1" aria-label="Carte">
      <svg viewBox="355 173 962 597" preserveAspectRatio="xMidYMid slice">
        <polygon fill="#ff0" points="771,400 794,388.500 810.500,381 810,390 888,369 864.500,465 831,477 820,510 816.500,526 808,526 777.500,586 779.500,598 778,606 774,607 751.500,594 762,567 730,567 766,531 777,499 770.500,441"/>
        <g fill="none" stroke="#1c140a" stroke-width="1.100">
          <path d="M771 400L794 388.500 810.500 381M888 369L864.500 465 831 477 820 510 816.500 526H808L777.500 586 779.500 598 778 606 774 607 751.500 594 762 567H730L766 531 777 499 770.500 441 771 400"/>
          <path d="M467 173L536.500 217.500 599 173"/>
          <path d="M752 173L758 180 812 334 814 346 813 355 810.500 382 810 390 888 369 1040 327.500 1185 289.500 1200 286 1295 258.500 1317 253"/>
          <path d="M355 285.500L408 280 448.500 294 508 362Q510 364 510 368L509 383 508 394 506 437V452L507.500 470 510.500 476V524L515 583 516.500 608 514 640 512 657V680L515 700 517 710 519 716 527 723.500 535.500 720 544 755 544.500 762 543.500 770"/>
          <path d="M355 340L365.500 368 355 382"/>
          <path d="M508 394L575 403 625 410 640 410.500 700 401 768 383 804 367 813 355"/>
          <path d="M506 437L411 415 391 420.500 408 503"/>
          <path d="M356 514L365 513 380 511 408 503 480 485 510.500 476"/>
          <path d="M355 511L356.500 515 371.500 559 441 573H485L487 526 511 524"/>
          <path d="M510.500 508L550 499 568 491.500 570.500 489V485L593 480.500 599 504 600 510 603.500 516 601 582 592 640 517 710"/>
          <path d="M600 504.500L653 507.500 684 500 704 515 720.500 576"/>
          <path d="M640 410.500L643 430 652 467 653.500 507"/>
          <path d="M601 582H655L718 578 722 575 730 567"/>
          <path d="M864.500 465L860.500 491 880 495.500 918 497 930 499 965 509 992 519 1012 535 1026 546 1066 567.500Q1070 569 1072 565L1089.500 520 1097 486 1093.500 453 1042.500 437 1022 458 992 519"/>
          <path d="M1097 486L1145.500 498 1165 482 1170 476"/>
          <path d="M1185 289.500L1139 413 1126.500 457 1160 470 1170 476 1191 486.500 1241 537 1246 596 1206 664 1154 732 1181.500 770"/>
          <path d="M1170 476L1293 512 1317 520M1293 512L1311 475 1317 468"/>
          <path d="M1100 173L1083 209 1072.500 253 1087 271H1140L1187 257 1241 186 1248 173"/>
          <path d="M816.500 526L861 566 860.500 612 867.500 651 882.500 686 822 770"/>
          <path d="M882.500 686L889 688 957 726 958 728 878 770"/>
          <path d="M958 728L964 726 1064 706 1075 709.500Q1080 711 1100 710.500L1145 726Q1150 728 1154 732"/>
          <path d="M1075 709.500L1073.500 711 1078 714Q1081 722 1079 740L1073 770"/>
          <path d="M1317 679L1257 735 1228 770"/>
          <path d="M778 606L774.500 634 760 643 729 670 694 723 666 748 655 770M666 748L610 761 556 770"/>
          <path d="M774.500 634L734 717.500 742 735 797 770"/>
          <path d="M355 602L385 606 434 609.500 457 606 492 596 510 584 515 583"/>
          <path d="M443.500 609L452 671Q447 677 441 681L414 694 381 699 378 700 355 697M381 699L376 730 373 765 373.500 770"/>
          <path d="M431 686L441 734 467 729 470 727 517 710M467 729L472 768"/>
        </g>
        <g fill="#ee0000" stroke="#200" stroke-width="1"><circle cx="480" cy="485" r="3.800"/><circle cx="473" cy="768.500" r="3.800"/><circle cx="1041" cy="683" r="3.800"/></g>
      </svg>
    </section>
  </main>

  <footer class="status-row d-flex align-items-center">
    <label class="ms-auto" for="coord">Coordonnée</label>
    <input class="box coord" id="coord" type="text" value="657672,6865029">
    <button class="btn pin-btn d-flex align-items-center justify-content-center" type="button" aria-label="Suivi du curseur"><svg width="16" height="18"><path d="M3 2l4-1 4 6-4 4-4-5z" fill="#ddd" stroke="#111" stroke-width="1.500"/><path d="M6 1l3 6M0 8.500l3 1M1 12.500l3-2M12 4l3-2" stroke="#111" stroke-width="1.500"/><circle cx="9.500" cy="12" r="4" fill="#fff" stroke="#111" stroke-width="1.800"/><circle cx="9.500" cy="12" r="1.500"/></svg></button>
    <label class="ms-2" for="scale">Échelle</label>
    <select class="box scale-list" id="scale"><option>1:13 113</option></select>
    <label class="ms-2" for="rot">Rotation</label>
    <div class="box spin d-flex">
      <input class="flex-fill" id="rot" type="text" value="0,0">
      <div class="spin-keys d-flex flex-column">
        <button class="btn" type="button" aria-label="Augmenter"><svg width="7" height="4"><path d="M0 4h7L3.500 0z"/></svg></button>
        <button class="btn" type="button" aria-label="Diminuer"><svg width="7" height="4"><path d="M0 0h7L3.500 4z"/></svg></button>
      </div>
    </div>
    <input class="tick ms-2" type="checkbox" id="render" checked>
    <label class="ms-1" for="render">Rendu</label>
    <button class="btn d-flex align-items-center gap-1 ms-3" type="button"><svg width="16" height="16"><path d="M8 0l6 2 2 6-2 6-6 2-6-2-2-6 2-6z" fill="#222"/><circle cx="8" cy="8" r="5" fill="#ccc"/><path d="M3 6h10M3 10h10M6 3v10M10 3v10" fill="none" stroke="#222" stroke-width="1.200"/></svg>EPSG:2154 (OTF)</button>
    <button class="btn talk-btn" type="button" aria-label="Messages"><svg width="16" height="16"><path d="M8 1c11 0 10 10 4 11l1 3-4-3C-3 13-3 1 8 1z" fill="#666"/><path d="M3.500 6.500h2M7 6.500h2M10.500 6.500h2" stroke="#fff" stroke-width="2"/></svg></button>
    <svg class="corner" width="12" height="12"><path d="M0 12L12 0M4 12l8-8M8 12l4-4" stroke="#999"/></svg>
  </footer>

  <svg class="rings" width="1" height="1" aria-hidden="true"><g fill="none" stroke="#ed1c24" stroke-width="10"><ellipse cx="360" cy="71" rx="22" ry="24"/><ellipse cx="685" cy="71.500" rx="28" ry="26.500"/><ellipse cx="771" cy="73" rx="33" ry="29"/></g></svg>
</div>
<script src="https://cdn.jsdelivr.net/npm/bootstrap@5.3.0/dist/js/bootstrap.bundle.min.js"></script>
</body>
</html>
